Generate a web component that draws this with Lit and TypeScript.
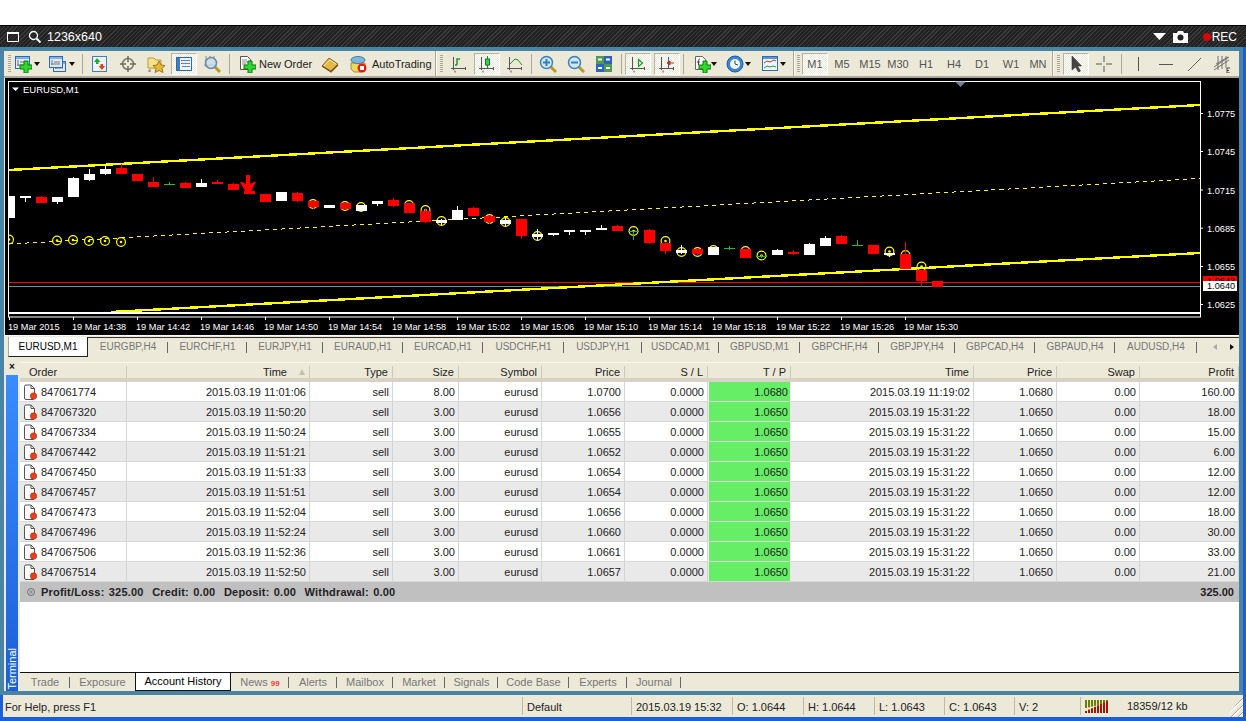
import { LitElement, html, svg, css } from 'lit';
import { customElement } from 'lit/decorators.js';

const axes = svg`<path d="M3.5 2v13M1 13.5h15M15.5 12v3M5 15.5v2" stroke="#555" fill="none"/>`;

const winIcon = (x: number, y: number, w: number, h: number) => svg`
  <rect x=${x + .5} y=${y + .5} width=${w} height=${h} fill="#dfe9f7" stroke="#2b6cb0"/>
  <rect x=${x + 1} y=${y + 1} width=${w - 1} height="2" fill="#7fb0e6"/>
  <path d="M${x + 3} ${y + 4}v${h - 6}M${x + 2} ${y + h - 3}h${w - 4}M${x + 5} ${y + 6}h${w - 7}" stroke="#777" fill="none"/>`;

const plus = (x: number, y: number) => svg`
  <path d="M${x + 4} ${y}h4v4h4v4h-4v4h-4v-4h-4v-4h4z" fill="#2fd82f" stroke="#0b7a0b"/>`;

const lens = (sign: string) => svg`
  <path d="M11 11l6 6" stroke="#b89a20" stroke-width="3"/>
  <circle cx="7.5" cy="7.5" r="6" fill="#cfe6f8" stroke="#3b7fc0" stroke-width="1.5"/>
  <path d=${sign} stroke="#2f7fc4" stroke-width="2" fill="none"/>`;

const ICONS: Record<string, unknown> = {
  newChart: svg`${winIcon(1, 1, 14, 12)}${plus(6, 6)}`,
  profiles: svg`${winIcon(5, 6, 12, 10)}${winIcon(1, 1, 13, 11)}`,
  market: svg`<rect x="1.5" y="1.5" width="14" height="15" fill="#eef3fb" stroke="#3f7fc0"/>
    <path d="M6 3l3.500 4H7.500v2H5V7H3z" fill="#1faa2b"/>
    <path d="M11 15l-3.500-4H9.500V9H12v2h2z" fill="#e0401a"/>`,
  navigator: svg`<circle cx="9" cy="9" r="5.500" fill="none" stroke="#7a7a72" stroke-width="1.500"/>
    <path d="M9 1v6M9 11v6M1 9h6M11 9h6" stroke="#6a6a62" stroke-width="1.500"/>`,
  favorites: svg`<path d="M1 3h6l2 2h5v8H1z" fill="#f6e28a" stroke="#b49a3c"/>
    <path d="M12 6l2 4 4 .5-3 3 1 4-4-2-4 2 1-4-3-3 4-.5z" fill="#e8b830" stroke="#9a7a20"/>
    <path d="M3 14v3M1 16h2" stroke="#777"/>`,
  terminal: svg`<rect x="1.500" y="2.500" width="15" height="13" fill="#eef3fb" stroke="#2b6cb0"/>
    <rect x="2" y="3" width="3" height="12" fill="#3f7fc0"/>
    <path d="M7 5.500h8M7 8.500h8M7 11.500h8" stroke="#5a86b8"/>
    <path d="M6 5.500h1M6 8.500h1" stroke="#e03020"/>`,
  tester: svg`<path d="M3 1v11M1 10h13M7 1v4M11 1v4" stroke="#888" fill="none"/>
    <path d="M12 12l5 5" stroke="#b89a20" stroke-width="3"/>
    <circle cx="8" cy="8" r="5.500" fill="#c6dcef" fill-opacity=".8" stroke="#6a8aa8" stroke-width="1.500"/>`,
  order: svg`<path d="M2.500 1.500h7l3 3v10h-10z" fill="#fff" stroke="#555"/>
    <path d="M4 5h5M4 7h6M4 9h4" stroke="#888"/>${plus(6, 6)}`,
  book: svg`<path d="M1 11l7-8 9 6-7 7z" fill="#e2b84a" stroke="#8a6420"/>
    <path d="M3 11l6-6 6 4" fill="none" stroke="#f7e6a0"/>
    <path d="M1 11l9 6 7-7" fill="none" stroke="#7a5418" stroke-width="1.200"/>`,
  auto: svg`<path d="M2 8h14v6l-4 3H5l-3-3z" fill="#f0d860" stroke="#a89030"/>
    <ellipse cx="9" cy="5" rx="7" ry="3.500" fill="#7fb4dc" stroke="#3f7fa8"/>
    <circle cx="13" cy="13" r="4.500" fill="#e02010"/><rect x="11" y="11" width="4" height="4" fill="#fff"/>`,
  bars: svg`${axes}<path d="M7 10V4h3M7 10H5" stroke="#1a9a2a" fill="none" stroke-width="1.500"/>`,
  candles: svg`${axes}<path d="M9.500 1v12" stroke="#1a8a2a"/><rect x="7.500" y="4" width="4" height="6" fill="#34d058" stroke="#117a22"/>`,
  line: svg`${axes}<path d="M4 9l5-5 3 1 4 5" stroke="#1a9a2a" fill="none"/>`,
  zoomIn: lens('M4 7.500h7M7.500 4v7'),
  zoomOut: lens('M4 7.500h7'),
  tile: svg`<rect x="1" y="1" width="8" height="8" fill="#4f9a4f"/><rect x="9" y="1" width="8" height="8" fill="#2f62c0"/>
    <rect x="1" y="9" width="8" height="8" fill="#2f62c0"/><rect x="9" y="9" width="8" height="8" fill="#4f9a4f"/>
    <path d="M3 4.500h4M11 4.500h4M3 13h4M11 13h4" stroke="#fff" stroke-width="2"/>`,
  scroll: svg`${axes}<path d="M9.500 4.500v7l4-3.500z" fill="none" stroke="#1a9a2a" stroke-width="1.200"/>`,
  shift: svg`${axes}<path d="M10.500 2v11" stroke="#2b5fa8"/><path d="M11 8h5M12 6l-3 2 3 2z" stroke="#c83010" fill="#c83010"/>`,
  indicators: svg`<path d="M2.500 1.500h7l3 3v10h-10z" fill="#fff" stroke="#666"/>
    <path d="M7 4c-1.500 0-1.500 1-1.500 2v4M4 7h3" stroke="#444" fill="none"/>${plus(6, 6)}`,
  clock: svg`<circle cx="9" cy="9" r="8" fill="#3a86d8" stroke="#1d5a9c"/><circle cx="9" cy="9" r="5" fill="#f4f8fc"/>
    <path d="M9 5.500V9l3 1" stroke="#444" fill="none"/>`,
  templates: svg`<rect x="1.500" y="1.500" width="15" height="14" fill="#eef3fb" stroke="#2b6cb0"/>
    <rect x="2" y="2" width="14" height="2" fill="#5d94d2"/>
    <path d="M3 8l3-2 3 1 4-2 2 1" stroke="#b84020" fill="none"/><path d="M3 13l3-2 3 1 3-1 3 1" stroke="#2a9a3a" fill="none"/>`,
  cursor: svg`<path d="M5 1v14l3.500-3 3 5 2-1-3-5h4z" fill="#444" stroke="#333" stroke-width=".6"/>`,
  cross: svg`<path d="M9 1v6M9 11v6M1 9h6M11 9h6" stroke="#555"/>`,
  vline: svg`<path d="M9.500 2v14" stroke="#555"/>`,
  hline: svg`<path d="M2 9.500h14" stroke="#555"/>`,
  trend: svg`<path d="M3 16L16 3" stroke="#666"/>`,
  fib: svg`<path d="M1 12L16 2M1 15L16 5M3 9l12-7M5 1v14M9 1v13M13 1v12" stroke="#666" fill="none" stroke-width=".9"/>
    <path d="M14 13h3M14 13v5h3M14 15.500h2" stroke="#444" fill="none"/>`,
};

type ToolItem = {
  k: 'grip' | 'sep' | 'end' | 'gap' | 'btn'
  w: number
  icon?: string
  label?: string
  tf?: string
  on?: boolean
  arrow?: number
  pad?: number
};

const btn = (icon: string, on = false): ToolItem => ({ k: 'btn', w: 28, icon, on });
const tf = (label: string, w = 28, on = false): ToolItem => ({ k: 'btn', w, tf: label, on });
const TOOLS: ToolItem[] = [
  { k: 'grip', w: 10 },
  { k: 'btn', w: 34, icon: 'newChart', arrow: 2 },
  { k: 'btn', w: 31, icon: 'profiles', arrow: 3 },
  { k: 'sep', w: 7 },
  btn('market'), btn('navigator'), btn('favorites'), btn('terminal', true), btn('tester'),
  { k: 'sep', w: 6 },
  { k: 'btn', w: 84, icon: 'order', label: 'New Order', pad: 5 },
  btn('book'),
  { k: 'btn', w: 90, icon: 'auto', label: 'AutoTrading', pad: 4 },
  { k: 'end', w: 4 },
  { k: 'grip', w: 7 },
  btn('bars'), btn('candles', true), btn('line'),
  { k: 'sep', w: 5 },
  btn('zoomIn'), btn('zoomOut'), btn('tile'),
  { k: 'sep', w: 6 },
  btn('scroll', true),
  { k: 'gap', w: 1 },
  btn('shift', true),
  { k: 'sep', w: 4 },
  { k: 'gap', w: 8 },
  { k: 'btn', w: 33, icon: 'indicators', arrow: 0 },
  { k: 'btn', w: 35, icon: 'clock', arrow: 1 },
  { k: 'btn', w: 31, icon: 'templates', arrow: 1 },
  { k: 'end', w: 3 },
  { k: 'grip', w: 7 },
  tf('M1', 26, true), tf('M5'), tf('M15'), tf('M30'), tf('H1'), tf('H4'), tf('D1'), tf('W1', 30), tf('MN', 24),
  { k: 'end', w: 5 },
  { k: 'grip', w: 7 },
  { k: 'gap', w: 1 },
  { k: 'btn', w: 26, icon: 'cursor', on: true },
  { k: 'btn', w: 29, icon: 'cross' },
  { k: 'sep', w: 6 },
  btn('vline'), btn('hline'), btn('trend'), btn('fib'),
];

// [body top, body bottom, wick top, wick bottom, colour], in page pixels
const CANDLES: [number, number, number, number, string][] = [
  [196, 218, 196, 218, 'w'], [196, 198, 196, 202, 'w'], [197, 203, 196, 203, 'r'], [197, 202, 197, 204, 'w'],
  [178, 197, 177, 197, 'w'], [174, 180, 169, 181, 'w'], [169, 174, 166, 175, 'w'], [168, 174, 164, 174, 'r'],
  [174, 181, 174, 181, 'r'], [182, 187, 177, 187, 'r'], [184, 185, 182, 185, 'g'], [183, 188, 182, 188, 'r'],
  [183, 187, 179, 187, 'w'], [182, 184, 180, 184, 'r'], [184, 190, 183, 190, 'r'], [191, 194, 191, 194, 'r'],
  [194, 202, 194, 202, 'r'], [192, 201, 192, 201, 'w'], [193, 201, 192, 202, 'r'], [201, 207, 201, 209, 'r'],
  [205, 208, 205, 208, 'w'], [203, 209, 203, 210, 'r'], [205, 211, 205, 211, 'w'], [201, 204, 201, 206, 'w'],
  [200, 206, 198, 207, 'r'], [203, 213, 203, 213, 'r'], [211, 222, 209, 223, 'r'], [220, 223, 219, 225, 'w'],
  [210, 220, 206, 220, 'w'], [208, 216, 207, 216, 'r'], [216, 222, 215, 224, 'r'], [220, 224, 218, 226, 'w'],
  [219, 236, 219, 239, 'r'], [234, 237, 229, 241, 'w'], [233, 235, 233, 236, 'w'], [230, 232, 230, 235, 'w'],
  [230, 232, 230, 235, 'w'], [228, 230, 225, 230, 'w'], [226, 231, 225, 231, 'r'], [231, 232, 231, 240, 'g'],
  [230, 243, 229, 244, 'r'], [243, 251, 243, 254, 'r'], [250, 253, 245, 254, 'w'], [249, 254, 248, 255, 'r'],
  [247, 255, 247, 255, 'w'], [248, 249, 246, 250, 'g'], [249, 258, 249, 258, 'r'], [256, 257, 254, 258, 'g'],
  [250, 255, 249, 255, 'w'], [252, 254, 250, 255, 'r'], [244, 255, 243, 255, 'w'], [238, 246, 236, 246, 'w'],
  [236, 244, 235, 244, 'r'], [245, 246, 240, 246, 'g'], [245, 254, 245, 254, 'r'], [253, 255, 253, 257, 'w'],
  [254, 269, 242, 269, 'r'], [270, 281, 270, 287, 'r'], [281, 287, 281, 287, 'r'],
];
const COLORS: Record<string, string> = { w: '#fff', r: '#f00', g: '#2fb52f' };

const RINGS: [number, number][] = [
  [9, 239.5], [57, 240.5], [73, 240], [89, 241], [105, 241], [121, 242],
  [313, 204], [345, 206], [361, 207], [409, 205], [425.5, 210], [441.5, 221], [489.5, 219], [505.5, 222],
  [537.5, 236], [633.5, 231], [665.5, 241], [681.5, 252], [697.5, 252], [713.5, 250], [745.5, 251],
  [761.5, 255.5], [889.5, 251.5], [905.5, 255], [921.5, 266.5],
];
const PRICES: [string, number][] = [['1.0775', 114], ['1.0745', 152], ['1.0715', 190.5], ['1.0685', 228.7], ['1.0655', 267], ['1.0625', 305]];
const TIMES = ['19 Mar 2015', '19 Mar 14:38', '19 Mar 14:42', '19 Mar 14:46', '19 Mar 14:50', '19 Mar 14:54', '19 Mar 14:58',
  '19 Mar 15:02', '19 Mar 15:06', '19 Mar 15:10', '19 Mar 15:14', '19 Mar 15:18', '19 Mar 15:22', '19 Mar 15:26', '19 Mar 15:30'];

const CHART_TABS: [string, number][] = [
  ['EURUSD,M1', 80], ['EURGBP,H4', 80], ['EURCHF,H1', 79], ['EURJPY,H1', 76], ['EURAUD,H1', 80], ['EURCAD,H1', 80],
  ['USDCHF,H1', 81], ['USDJPY,H1', 78], ['USDCAD,M1', 77], ['GBPUSD,M1', 81], ['GBPCHF,H4', 79], ['GBPJPY,H4', 76],
  ['GBPCAD,H4', 80], ['GBPAUD,H4', 80], ['AUDUSD,H4', 82],
];

const HEAD = ['Order', 'Time', 'Type', 'Size', 'Symbol', 'Price', 'S / L', 'T / P', 'Time', 'Price', 'Swap', 'Profit'];
const ROWS: string[][] = [
  ['847061774', '2015.03.19 11:01:06', '8.00', '1.0700', '1.0680', '2015.03.19 11:19:02', '1.0680', '160.00'],
  ['847067320', '2015.03.19 11:50:20', '3.00', '1.0656', '1.0650', '2015.03.19 15:31:22', '1.0650', '18.00'],
  ['847067334', '2015.03.19 11:50:24', '3.00', '1.0655', '1.0650', '2015.03.19 15:31:22', '1.0650', '15.00'],
  ['847067442', '2015.03.19 11:51:21', '3.00', '1.0652', '1.0650', '2015.03.19 15:31:22', '1.0650', '6.00'],
  ['847067450', '2015.03.19 11:51:33', '3.00', '1.0654', '1.0650', '2015.03.19 15:31:22', '1.0650', '12.00'],
  ['847067457', '2015.03.19 11:51:51', '3.00', '1.0654', '1.0650', '2015.03.19 15:31:22', '1.0650', '12.00'],
  ['847067473', '2015.03.19 11:52:04', '3.00', '1.0656', '1.0650', '2015.03.19 15:31:22', '1.0650', '18.00'],
  ['847067496', '2015.03.19 11:52:24', '3.00', '1.0660', '1.0650', '2015.03.19 15:31:22', '1.0650', '30.00'],
  ['847067506', '2015.03.19 11:52:36', '3.00', '1.0661', '1.0650', '2015.03.19 15:31:22', '1.0650', '33.00'],
  ['847067514', '2015.03.19 11:52:50', '3.00', '1.0657', '1.0650', '2015.03.19 15:31:22', '1.0650', '21.00'],
];

const BOTTOM_TABS: [string, number][] = [
  ['Trade', 50], ['Exposure', 65], ['Account History', 96], ['News', 58], ['Alerts', 48], ['Mailbox', 56], ['Market', 52],
  ['Signals', 53], ['Code Base', 71], ['Experts', 58], ['Journal', 54],
];
const STATUS: [string, number][] = [
  ['For Help, press F1', 519], ['Default', 109], ['2015.03.19 15:32', 101], ['O: 1.0644', 71], ['H: 1.0644', 71],
  ['L: 1.0643', 70], ['C: 1.0643', 70], ['V: 2', 66],
];

@customElement('app-root')
export class AppRoot extends LitElement {
  static styles = css`
    * { box-sizing: border-box; }
    :host {
      display: block;
      width: 1246px;
      height: 721px;
      overflow: hidden;
      background: #fff;
      font: 11px "Liberation Sans", Arial, sans-serif;
      color: #222;
    }
    svg { display: block; flex: none; }

    .rec {
      margin-top: 25px;
      height: 22px;
      border-top: 1px solid #000;
      background: repeating-linear-gradient(135deg, #3a3a3a 0 1px, #222 1px 3px);
      display: flex;
      align-items: center;
      padding: 0 9px 0 7px;
      color: #fff;
      font-size: 12.5px;
    }
    .rec .size { margin-left: 5px; }
    .rec .right { margin-left: auto; display: flex; align-items: center; }
    .rec .dot { width: 8px; height: 8px; border-radius: 50%; background: #d00; margin: 0 1px 0 15px; }
    .rec .word { font-size: 12px; }

    .window {
      height: 674px;
      background: #4a84a4;
      padding: 4px 4px 0;
      border-right: 3px solid #1a5fd8;
      border-bottom: 4px solid #1a5fd8;
    }

    .toolbar {
      height: 27px;
      display: flex;
      align-items: stretch;
      background: #ece9d8;
      border-bottom: 2px solid #aca899;
    }
    .grip { flex: none; display: flex; align-items: center; justify-content: center; }
    .grip i { width: 3px; height: 17px; background: repeating-linear-gradient(#aca899 0 1px, #ece9d8 1px 2px); }
    .sep { flex: none; display: flex; align-items: center; justify-content: center; }
    .sep i { width: 1px; height: 20px; background: #aca899; }
    .end { flex: none; display: flex; justify-content: center; }
    .end i { width: 2px; background: #f8f7f0; border-left: 1px solid #aca899; }
    .gap { flex: none; }
    .btn {
      flex: none;
      margin: 2px 0 1px;
      display: flex;
      align-items: center;
      justify-content: center;
      border: 1px solid transparent;
      color: #222;
    }
    .btn.text { justify-content: flex-start; }
    .btn.left { justify-content: flex-start; border-width: 0; }
    .btn.on {
      border-color: #b8b4a2 #fff #fff #b8b4a2;
      background: repeating-conic-gradient(#fff 0 25%, #ece9d8 0 50%) 0 0 / 2px 2px;
    }
    .btn.inset { margin-left: 1px; margin-right: 1px; }
    .tf { color: #555; font-size: 11px; }
    .caret { width: 0; height: 0; border: 3px solid transparent; border-top: 4px solid #111; border-bottom: 0; margin-left: 4px; }
    .btn .lbl { white-space: nowrap; }

    .chart { width: 1235px; height: 257px; background: #000; border-left: 1px solid #ece9d8; }
    .chart text { font: 9.2px "Liberation Sans", Arial, sans-serif; fill: #fff; }
    .chart .name { font-size: 9.5px; }
    .chart .dark { fill: #000; }
    .chart .candles { shape-rendering: crispEdges; }
    .white { height: 1px; background: #fff; }

    .ctabs {
      height: 22px;
      display: flex;
      align-items: stretch;
      background: #ece9d8;
      padding: 1px 0 0 4px;
      color: #777;
      font-size: 10px;
      position: relative;
    }
    .ctabs::before {
      content: "";
      position: absolute;
      left: 83px; right: 0; top: 1px;
      height: 1px;
      background: #333;
    }
    .ctab { flex: none; display: flex; align-items: center; justify-content: center; padding-bottom: 3px; position: relative; }
    .ctab + .ctab::after {
      content: "";
      position: absolute;
      right: 0; top: 5px;
      width: 1px; height: 11px;
      background: #666;
    }
    .ctab.active {
      background: #fff;
      color: #000;
      height: 20px;
      border-right: 1px solid #222;
      border-bottom: 1px solid #222;
      border-left: 1px solid #aca899;
      padding-bottom: 1px;
    }
    .scroll { margin-left: auto; display: flex; align-items: center; gap: 13px; padding: 0 5px 2px 0; }
    .scroll b { width: 0; height: 0; border: 3px solid transparent; }
    .scroll .l { border-left-width: 0; border-right: 4px solid #aaa; }
    .scroll .r { border-right-width: 0; border-left: 4px solid #111; }

    .term { height: 333px; display: flex; background: #ece9d8; padding-left: 2px; }
    .side { width: 14px; flex: none; display: flex; flex-direction: column; }
    .close { height: 17px; width: 12px; text-align: center; font: bold 10px/17px "Liberation Sans", sans-serif; color: #111; }
    .rail {
      flex: 1;
      width: 12px;
      background: linear-gradient(#3a8cff, #1a5fd8);
      display: flex;
      align-items: flex-end;
      justify-content: center;
    }
    .rail span {
      writing-mode: vertical-rl;
      transform: rotate(180deg);
      color: #fff;
      font-size: 11px;
      padding-top: 1px;
    }
    .main { flex: 1; min-width: 0; display: flex; flex-direction: column; padding-top: 4px; }
    .grid { flex: 1; background: #fff; }
    .row { display: grid; grid-template-columns: 107px 183px 83px 66px 83px 83px 83px 83px 183px 83px 83px 99px; height: 20px; }
    .head { height: 20px; background: #ece9d8; border-bottom: 4px solid #d6d3c4; border-top: 1px solid #f8f7f0; color: #222; }
    .head div { display: flex; align-items: center; justify-content: flex-end; padding-right: 4px; border-right: 1px solid #cdcab9; margin: 3px 0 1px; position: relative; }
    .head div:first-child { justify-content: flex-start; padding-left: 9px; }
    .head .sorted { padding-right: 22px; }
    .sort { position: absolute; right: 4px; top: 3px; width: 0; height: 0; border: 3.5px solid transparent; border-bottom: 6px solid #c4c0ae; border-top: 0; }
    .body { border-bottom: 1px solid #d8d8d8; }
    .body:nth-child(even) { background: #e9e9e9; }
    .body div { display: flex; align-items: center; justify-content: flex-end; padding-right: 3px; border-right: 1px solid #d4d4d4; white-space: nowrap; }
    .body div:first-child { justify-content: flex-start; padding-left: 3px; gap: 3px; }
    .body .tp { background: #66ee66; border-right: 0; margin: 0 1px; padding-right: 2px; }
    .sum {
      height: 20px;
      background: #c0c0c0;
      display: flex;
      align-items: center;
      padding: 0 5px 0 7px;
      font-weight: bold;
      color: #222;
      gap: 4px;
    }
    .sum .ball { width: 8px; height: 8px; border-radius: 50%; background: #999; border: 1px solid #777; box-shadow: inset 0 0 0 1px #ccc; margin-right: 2px; }
    .sum .txt { word-spacing: 1px; letter-spacing: .2px; white-space: pre; }
    .sum .total { margin-left: auto; }

    .btabs { height: 19px; flex: none; display: flex; border-top: 1px solid #111; background: #ece9d8; color: #777; }
    .btab { flex: none; display: flex; align-items: center; justify-content: center; position: relative; }
    .btab:not(.active):not(.prev)::after {
      content: "";
      position: absolute;
      right: 0; top: 4px;
      width: 1px; height: 11px;
      background: #666;
    }
    .btab.active {
      background: #fff;
      color: #000;
      height: 18px;
      border: 1px solid #111;
      border-top: 0;
      padding: 0 0 2px;
    }
    .news { color: #f04040; font-size: 8px; font-weight: bold; margin: 3px 0 0 3px; }

    .status {
      height: 22px;
      margin: 4px -4px 0;
      background: #ece9d8;
      border-left: 3px solid #1a5fd8;
      display: flex;
      align-items: stretch;
      color: #222;
    }
    .field { flex: none; display: flex; align-items: center; padding: 1px 0 0 2px; white-space: nowrap; }
    .field + .field { border-left: 1px solid #bdb9a6; margin: 2px 0; padding-left: 4px; }
    .meter { flex: none; width: 147px; margin: 2px 0; border-left: 1px solid #bdb9a6; display: flex; align-items: center; padding-left: 4px; gap: 18px; }
    .grab { flex: 1; background: repeating-linear-gradient(135deg, transparent 0 3px, #aca899 3px 4px, #fff 4px 5px); clip-path: polygon(100% 0, 100% 100%, 0 100%); }
  `;

  private renderTool(t: ToolItem) {
    const w = `width:${t.w}px`;
    if (t.k === 'grip') return html`<div class="grip" style=${w}><i></i></div>`;
    if (t.k === 'sep') return html`<div class="sep" style=${w}><i></i></div>`;
    if (t.k === 'end') return html`<div class="end" style=${w}><i></i></div>`;
    if (t.k === 'gap') return html`<div class="gap" style=${w}></div>`;
    if (t.tf) return html`<div class="btn ${t.on ? 'on' : ''}" style=${w}><span class="tf">${t.tf}</span></div>`;
    const icon = html`<svg width="18" height="18" viewBox="0 0 18 18">${ICONS[t.icon as string]}</svg>`;
    if (t.label) {
      return html`<div class="btn text" style="${w};padding-left:${t.pad}px">${icon}<span class="lbl" style="margin-left:${t.icon === 'auto' ? 5 : 3}px">${t.label}</span></div>`;
    }
    if (t.arrow !== undefined) {
      return html`<div class="btn left" style=${w}>${icon}<i class="caret" style="margin-left:${t.arrow}px"></i></div>`;
    }
    if (t.on && t.w === 28) return html`<div class="btn on inset" style="width:26px">${icon}</div>`;
    return html`<div class="btn ${t.on ? 'on' : ''}" style=${w}>${icon}</div>`;
  }

  private renderChart() {
    return html`<svg class="chart" width="1234" height="257" viewBox="5 78 1234 257">
      <defs><clipPath id="plot"><rect x="9" y="82" width="1191" height="230"></rect></clipPath></defs>
      <g fill="none" stroke="#fff">
        <rect x="8.500" y="81.500" width="1192" height="231"></rect>
        <rect x="8.500" y="313.500" width="1192" height="3.500"></rect>
      </g>
      <g clip-path="url(#plot)">
        <g class="candles">
          <path d="M9 282.500H1200" stroke="#f00"/>
          <path d="M9 286.500H1200" stroke="#778899"/>
          <path d="M9 170L1200 105" stroke="#ff0" stroke-width="2.400"/>
          <path d="M111 312L1200 253" stroke="#ff0" stroke-width="2.400"/>
          <path d="M9 244L1200 178.500" stroke="#ff0" stroke-dasharray="4 4"/>
        </g>
        ${RINGS.map(([x, y]) => svg`
          <circle cx=${x} cy=${y} r="4.400" fill="none" stroke="#ff0" stroke-width="1.200"/>
          <circle cx=${x} cy=${y} r="1.300" fill="#ff0"/>`)}
        <g class="candles">
          ${CANDLES.map(([top, bot, wt, wb, c], i) => {
            const x = 9 + 16 * i;
            return svg`
              <rect x=${x} y=${wt} width="1" height=${wb - wt} fill=${COLORS[c]}></rect>
              <rect x=${x - 5} y=${top} width="11" height=${bot - top} fill=${COLORS[c]}></rect>`;
          })}
        </g>
        <path d="M246 175H250V184L254 182H256L251 191H245L240 182H242L246 184Z" fill="#f00"/>
      </g>
      <path d="M955 81.500H966L960.500 87Z" fill="#708090"/>
      <path d="M12 87.500H19L15.500 91Z" fill="#fff"/>
      <text class="name" x="23" y="92.500">EURUSD,M1</text>
      ${PRICES.map(([p, y]) => svg`
        <path d="M1201 ${y - .5}h2" stroke="#fff"/>
        <text x="1207" y=${y + 3.2}>${p}</text>`)}
      <rect x="1203" y="276" width="34" height="6" fill="#f00"></rect>
      <text class="dark" x="1207" y="284">1.0643</text>
      <rect x="1203" y="281" width="34" height="10" fill="#fff"></rect>
      <text class="dark" x="1207" y="289.200">1.0640</text>
      ${TIMES.map((t, i) => svg`
        <path d="M${9.5 + 64 * i} 317v3" stroke="#fff"/>
        <text x=${8 + 64 * i} y="329.800">${t}</text>`)}
    </svg>`;
  }

  private renderRow(r: string[]) {
    return html`<div class="row body">
      <div>
        <svg width="15" height="16" viewBox="0 0 15 16">
          <path d="M1.500 2.500q0-1.500 1.500-1.500H8l3.500 3.500V14q0 1.500-1.500 1.500H3q-1.500 0-1.500-1.500z" fill="#fff" stroke="#555"/>
          <path d="M8 1v3.500h3.500" fill="none" stroke="#555"/>
          <circle cx="10.500" cy="12" r="3.200" fill="#e8401a" stroke="#b02a10" stroke-width=".6"/>
        </svg>${r[0]}
      </div>
      <div>${r[1]}</div><div>sell</div><div>${r[2]}</div><div>eurusd</div><div>${r[3]}</div><div>0.0000</div>
      <div class="tp">${r[4]}</div><div>${r[5]}</div><div>${r[6]}</div><div>0.00</div><div>${r[7]}</div>
    </div>`;
  }

  render() {
    return html`
      <div class="rec">
        <svg width="12" height="11" viewBox="0 0 12 11"><path d="M.5 1.500h11v9H.5z" fill="none" stroke="#fff"/><path d="M0 1h12v2H0z" fill="#fff"/></svg>
        <svg style="margin-left:9px" width="14" height="14" viewBox="0 0 14 14"><circle cx="5.500" cy="5.500" r="4" fill="none" stroke="#fff" stroke-width="1.300"/><path d="M8.500 8.500l4 4" stroke="#fff" stroke-width="1.800"/></svg>
        <span class="size">1236x640</span>
        <div class="right">
          <svg width="13" height="7" viewBox="0 0 13 7"><path d="M0 0h13L6.500 7z" fill="#fff"/></svg>
          <svg style="margin-left:7px" width="15" height="12" viewBox="0 0 15 12"><path d="M0 2h4l1-2h5l1 2h4v10H0z" fill="#fff"/><circle cx="7.500" cy="6.500" r="3" fill="#222"/></svg>
          <i class="dot"></i><span class="word">REC</span>
        </div>
      </div>
      <div class="window">
        <div class="toolbar">${TOOLS.map(t => this.renderTool(t))}</div>
        ${this.renderChart()}
        <div class="white"></div>
        <div class="ctabs">
          ${CHART_TABS.map(([t, w], i) => html`<div class="ctab ${i === 0 ? 'active' : ''}" style="width:${w}px">${t}</div>`)}
          <div class="scroll"><b class="l"></b><b class="r"></b></div>
        </div>
        <div class="term">
          <div class="side">
            <div class="close">×</div>
            <div class="rail"><span>Terminal</span></div>
          </div>
          <div class="main">
            <div class="row head">
              ${HEAD.map((h, i) => html`<div class=${i === 1 ? 'sorted' : ''}>${h}${i === 1 ? html`<i class="sort"></i>` : ''}</div>`)}
            </div>
            <div class="grid">
              ${ROWS.map(r => this.renderRow(r))}
              <div class="sum">
                <i class="ball"></i>
                <span class="txt">Profit/Loss: 325.00  Credit: 0.00  Deposit: 0.00  Withdrawal: 0.00</span>
                <span class="total">325.00</span>
              </div>
            </div>
            <div class="btabs">
              ${BOTTOM_TABS.map(([t, w], i) => html`<div class="btab ${i === 2 ? 'active' : ''} ${i === 1 ? 'prev' : ''}" style="width:${w}px">${t}${t === 'News' ? html`<span class="news">99</span>` : ''}</div>`)}
            </div>
          </div>
        </div>
        <div class="status">
          ${STATUS.map(([t, w]) => html`<div class="field" style="width:${w}px">${t}</div>`)}
          <div class="meter">
            <svg width="24" height="13" viewBox="0 0 24 13">
              ${[0, 1, 2, 3, 4, 5, 6, 7].map(i => svg`
                <rect x=${i * 3} y="0" width="2" height=${8 - i * .7} fill="#6b7f00"></rect>
                <rect x=${i * 3} y=${11 - i * 1.4} width="2" height=${2 + i * 1.4} fill="#a81400"></rect>`)}
            </svg>
            <span>18359/12 kb</span>
          </div>
          <div class="grab"></div>
        </div>
      </div>
    `;
  }
}
